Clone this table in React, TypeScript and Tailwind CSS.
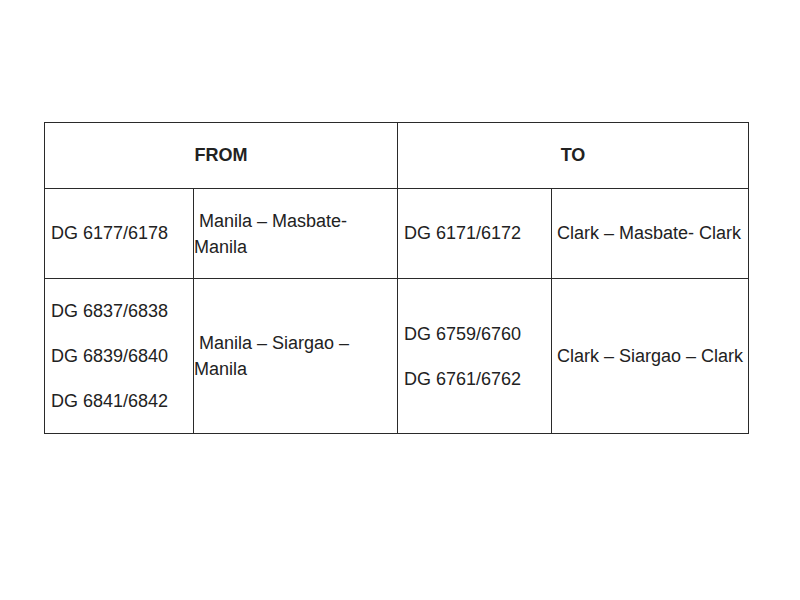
import React from 'react';

const cell = 'border border-[#2a2a2a] align-middle p-0';

export default function App() {
  return (
    <div className="w-[800px] h-[600px] bg-white pt-[122px] pl-[44px] font-['Liberation_Sans',Arial,sans-serif] text-[18px] text-[#222]">
      <table className="table-fixed border-collapse w-[704px]">
        <colgroup>
          <col className="w-[149px]" />
          <col className="w-[204px]" />
          <col className="w-[154px]" />
          <col className="w-[197px]" />
        </colgroup>
        <tbody>
          {/* Header */}
          <tr className="h-[66px]">
            <td colSpan={2} className={`${cell} text-center font-bold`}>FROM</td>
            <td colSpan={2} className={`${cell} text-center font-bold`}>TO</td>
          </tr>

          {/* Masbate */}
          <tr className="h-[90px]">
            <td className={`${cell} pl-[6px]`}>DG 6177/6178</td>
            <td className={`${cell} leading-[26px] whitespace-nowrap`}>
              {'\u00a0Manila – Masbate-'}
              <br />
              Manila
            </td>
            <td className={`${cell} pl-[6px]`}>DG 6171/6172</td>
            <td className={`${cell} pl-[5px] whitespace-nowrap`}>Clark – Masbate- Clark</td>
          </tr>

          {/* Siargao */}
          <tr className="h-[155px]">
            <td className={`${cell} pl-[6px]`}>
              <div className="flex flex-col gap-[19px] leading-[26px]">
                <span>DG 6837/6838</span>
                <span>DG 6839/6840</span>
                <span>DG 6841/6842</span>
              </div>
            </td>
            <td className={`${cell} leading-[26px] whitespace-nowrap`}>
              {'\u00a0Manila – Siargao –'}
              <br />
              Manila
            </td>
            <td className={`${cell} pl-[6px]`}>
              <div className="flex flex-col gap-[19px] leading-[26px]">
                <span>DG 6759/6760</span>
                <span>DG 6761/6762</span>
              </div>
            </td>
            <td className={`${cell} pl-[5px] whitespace-nowrap`}>Clark – Siargao – Clark</td>
          </tr>
        </tbody>
      </table>
    </div>
  );
}
